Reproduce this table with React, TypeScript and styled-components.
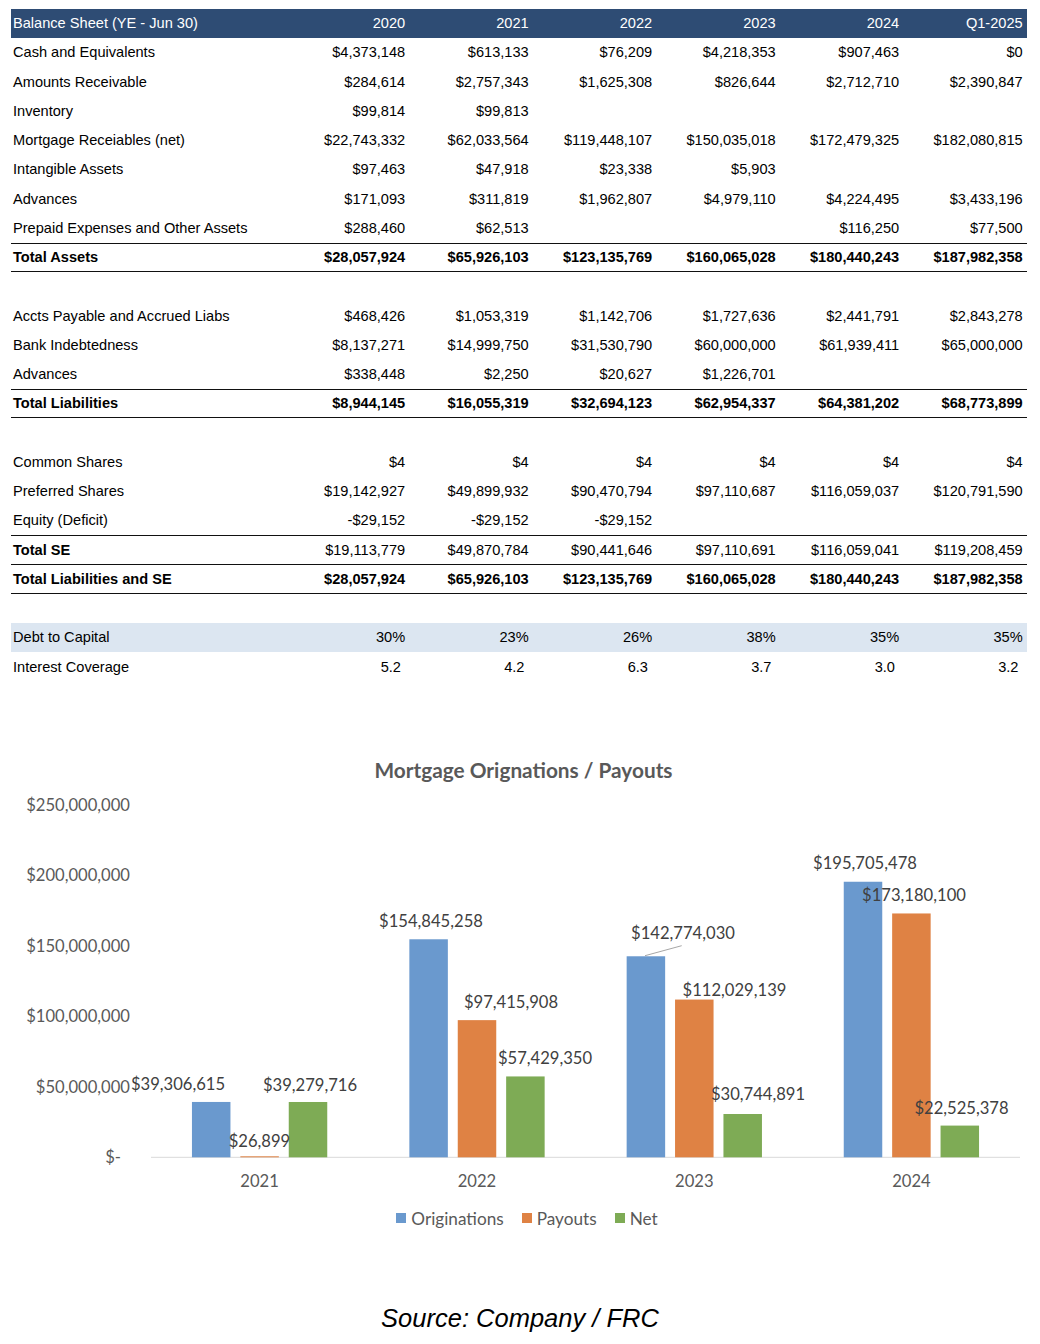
import React from 'react';
import styled, { createGlobalStyle } from 'styled-components';

const GlobalStyle = createGlobalStyle`
  html, body { margin: 0; padding: 0; background: #ffffff; }
  body { font-family: "Liberation Sans", Arial, sans-serif; }
`;

const Page = styled.div`
  width: 1040px;
  display: flex;
  flex-direction: column;
  padding-top: 8.5px;
`;

const Sheet = styled.div`
  margin-left: 11px;
  width: 1016px;
  display: flex;
  flex-direction: column;
`;

const Row = styled.div<{ $head?: boolean; $band?: boolean; $top?: boolean; $bottom?: boolean }>`
  display: grid;
  grid-template-columns: 275px repeat(6, 123.5px);
  height: 29.25px;
  box-sizing: border-box;
  align-items: center;
  font-size: 14.6px;
  background: ${(p) => (p.$head ? '#2E4C74' : p.$band ? '#DCE6F1' : 'transparent')};
  color: ${(p) => (p.$head ? '#ffffff' : '#000000')};
  border-top: ${(p) => (p.$top ? '1px solid #111' : 'none')};
  border-bottom: ${(p) => (p.$bottom ? '1px solid #111' : 'none')};
`;

const Label = styled.div<{ $bold?: boolean }>`
  padding-left: 2px;
  font-weight: ${(p) => (p.$bold ? 700 : 400)};
  white-space: nowrap;
`;

const Value = styled.div<{ $bold?: boolean; $inset?: boolean }>`
  text-align: right;
  padding-right: ${(p) => (p.$inset ? '8.5px' : '4.3px')};
  font-weight: ${(p) => (p.$bold ? 700 : 400)};
  white-space: nowrap;
`;

const ChartTitle = styled.div`
  margin-top: 76px;
  padding-left: 7px;
  text-align: center;
  font-family: Lato, "Open Sans", sans-serif;
  font-weight: 700;
  font-size: 20.8px;
  line-height: 26px;
  color: #595959;
`;

const Plot = styled.svg`
  display: block;
  width: 1040px;
  height: 416px;
  font-family: Lato, "Open Sans", sans-serif;
`;

const Legend = styled.div`
  margin-top: 8px;
  padding-left: 14px;
  display: flex;
  justify-content: center;
  align-items: center;
  gap: 18px;
  height: 22px;
  font-family: Lato, "Open Sans", sans-serif;
  font-size: 17.2px;
  color: #595959;
`;

const LegendItem = styled.div`
  display: flex;
  align-items: center;
  gap: 5px;
`;

const Swatch = styled.span<{ $color: string }>`
  width: 10px;
  height: 10px;
  background: ${(p) => p.$color};
`;

const Source = styled.div`
  margin-top: 74px;
  text-align: center;
  font-family: "Liberation Sans", Arial, sans-serif;
  font-style: italic;
  font-size: 25.5px;
  line-height: 30px;
  color: #000;
`;

type SheetRow = {
  label?: string;
  values?: string[];
  boldLabel?: boolean;
  boldValues?: boolean;
  top?: boolean;
  bottom?: boolean;
  band?: boolean;
  inset?: boolean;
};

const years = ['2020', '2021', '2022', '2023', '2024', 'Q1-2025'];

const rows: SheetRow[] = [
  { label: 'Cash and Equivalents', values: ['$4,373,148', '$613,133', '$76,209', '$4,218,353', '$907,463', '$0'] },
  { label: 'Amounts Receivable', values: ['$284,614', '$2,757,343', '$1,625,308', '$826,644', '$2,712,710', '$2,390,847'] },
  { label: 'Inventory', values: ['$99,814', '$99,813', '', '', '', ''] },
  { label: 'Mortgage Receiables (net)', values: ['$22,743,332', '$62,033,564', '$119,448,107', '$150,035,018', '$172,479,325', '$182,080,815'] },
  { label: 'Intangible Assets', values: ['$97,463', '$47,918', '$23,338', '$5,903', '', ''] },
  { label: 'Advances', values: ['$171,093', '$311,819', '$1,962,807', '$4,979,110', '$4,224,495', '$3,433,196'] },
  { label: 'Prepaid Expenses and Other Assets', values: ['$288,460', '$62,513', '', '', '$116,250', '$77,500'] },
  { label: 'Total Assets', values: ['$28,057,924', '$65,926,103', '$123,135,769', '$160,065,028', '$180,440,243', '$187,982,358'], boldLabel: true, boldValues: true, top: true, bottom: true },
  {},
  { label: 'Accts Payable and Accrued Liabs', values: ['$468,426', '$1,053,319', '$1,142,706', '$1,727,636', '$2,441,791', '$2,843,278'] },
  { label: 'Bank Indebtedness', values: ['$8,137,271', '$14,999,750', '$31,530,790', '$60,000,000', '$61,939,411', '$65,000,000'] },
  { label: 'Advances', values: ['$338,448', '$2,250', '$20,627', '$1,226,701', '', ''] },
  { label: 'Total Liabilities', values: ['$8,944,145', '$16,055,319', '$32,694,123', '$62,954,337', '$64,381,202', '$68,773,899'], boldLabel: true, boldValues: true, top: true, bottom: true },
  {},
  { label: 'Common Shares', values: ['$4', '$4', '$4', '$4', '$4', '$4'] },
  { label: 'Preferred Shares', values: ['$19,142,927', '$49,899,932', '$90,470,794', '$97,110,687', '$116,059,037', '$120,791,590'] },
  { label: 'Equity (Deficit)', values: ['-$29,152', '-$29,152', '-$29,152', '', '', ''] },
  { label: 'Total SE', values: ['$19,113,779', '$49,870,784', '$90,441,646', '$97,110,691', '$116,059,041', '$119,208,459'], boldLabel: true, top: true },
  { label: 'Total Liabilities and SE', values: ['$28,057,924', '$65,926,103', '$123,135,769', '$160,065,028', '$180,440,243', '$187,982,358'], boldLabel: true, boldValues: true, top: true, bottom: true },
  {},
  { label: 'Debt to Capital', values: ['30%', '23%', '26%', '38%', '35%', '35%'], band: true },
  { label: 'Interest Coverage', values: ['5.2', '4.2', '6.3', '3.7', '3.0', '3.2'], inset: true },
];

const BLUE = '#6A99CE';
const ORANGE = '#DF8244';
const GREEN = '#7EAB55';

const BASE = 1158.3;
const SCALE = 70.4 / 50e6;
const BAR_W = 38.5;
const STEP = 48.4;

type Bar = { value: number; color: string; label: string; lx: number; ly: number };
type Group = { year: string; cx: number; bars: Bar[] };

const groups: Group[] = [
  {
    year: '2021',
    cx: 259.6,
    bars: [
      { value: 39306615, color: BLUE, label: '$39,306,615', lx: 178, ly: 1084 },
      { value: 26899, color: ORANGE, label: '$26,899', lx: 259.5, ly: 1141 },
      { value: 39279716, color: GREEN, label: '$39,279,716', lx: 310, ly: 1085 },
    ],
  },
  {
    year: '2022',
    cx: 477,
    bars: [
      { value: 154845258, color: BLUE, label: '$154,845,258', lx: 431, ly: 921 },
      { value: 97415908, color: ORANGE, label: '$97,415,908', lx: 511, ly: 1002 },
      { value: 57429350, color: GREEN, label: '$57,429,350', lx: 545, ly: 1058 },
    ],
  },
  {
    year: '2023',
    cx: 694.3,
    bars: [
      { value: 142774030, color: BLUE, label: '$142,774,030', lx: 683, ly: 933 },
      { value: 112029139, color: ORANGE, label: '$112,029,139', lx: 734.5, ly: 990 },
      { value: 30744891, color: GREEN, label: '$30,744,891', lx: 758, ly: 1094 },
    ],
  },
  {
    year: '2024',
    cx: 911.4,
    bars: [
      { value: 195705478, color: BLUE, label: '$195,705,478', lx: 865, ly: 863 },
      { value: 173180100, color: ORANGE, label: '$173,180,100', lx: 914, ly: 895 },
      { value: 22525378, color: GREEN, label: '$22,525,378', lx: 961.5, ly: 1108 },
    ],
  },
];

const ticks = [
  { text: '$250,000,000', v: 250e6, x: 130 },
  { text: '$200,000,000', v: 200e6, x: 130 },
  { text: '$150,000,000', v: 150e6, x: 130 },
  { text: '$100,000,000', v: 100e6, x: 130 },
  { text: '$50,000,000', v: 50e6, x: 130 },
  { text: '$-', v: 0, x: 121 },
];

const FS = 16.6;
const BASELINE_OFF = 7;

function Chart() {
  return (
    <Plot viewBox="0 784 1040 416">
      {ticks.map((t) => (
        <text
          key={t.text}
          x={t.x}
          y={BASE - t.v * SCALE - 1.3 + BASELINE_OFF}
          textAnchor="end"
          fontSize={FS}
          fill="#595959"
        >
          {t.text}
        </text>
      ))}
      <line x1={151} x2={1020} y1={BASE} y2={BASE} stroke="#D9D9D9" strokeWidth={1} />
      {groups.map((g) => (
        <g key={g.year}>
          {g.bars.map((b, i) => {
            const h = Math.max(b.value * SCALE, 1);
            const cx = g.cx + (i - 1) * STEP;
            return (
              <rect key={i} x={cx - BAR_W / 2} y={BASE - h} width={BAR_W} height={h} fill={b.color} />
            );
          })}
          <text x={g.cx} y={1181 + BASELINE_OFF} textAnchor="middle" fontSize={FS} fill="#595959">
            {g.year}
          </text>
        </g>
      ))}
      <line x1={645} y1={956.7} x2={681.7} y2={946.7} stroke="#A6A6A6" strokeWidth={1} />
      {groups.map((g) =>
        g.bars.map((b) => (
          <text
            key={b.label}
            x={b.lx}
            y={b.ly + BASELINE_OFF}
            textAnchor="middle"
            fontSize={FS}
            fill="#404040"
          >
            {b.label}
          </text>
        ))
      )}
    </Plot>
  );
}

export default function App() {
  return (
    <Page>
      <GlobalStyle />
      <Sheet>
        <Row $head>
          <Label>Balance Sheet (YE - Jun 30)</Label>
          {years.map((y) => (
            <Value key={y}>{y}</Value>
          ))}
        </Row>
        {rows.map((r, i) => (
          <Row key={i} $band={r.band} $top={r.top} $bottom={r.bottom}>
            <Label $bold={r.boldLabel}>{r.label ?? ''}</Label>
            {(r.values ?? ['', '', '', '', '', '']).map((v, j) => (
              <Value key={j} $bold={r.boldValues} $inset={r.inset}>
                {v}
              </Value>
            ))}
          </Row>
        ))}
      </Sheet>
      <ChartTitle>Mortgage Orignations / Payouts</ChartTitle>
      <Chart />
      <Legend>
        <LegendItem>
          <Swatch $color={BLUE} />
          Originations
        </LegendItem>
        <LegendItem>
          <Swatch $color={ORANGE} />
          Payouts
        </LegendItem>
        <LegendItem>
          <Swatch $color={GREEN} />
          Net
        </LegendItem>
      </Legend>
      <Source>Source: Company / FRC</Source>
    </Page>
  );
}
